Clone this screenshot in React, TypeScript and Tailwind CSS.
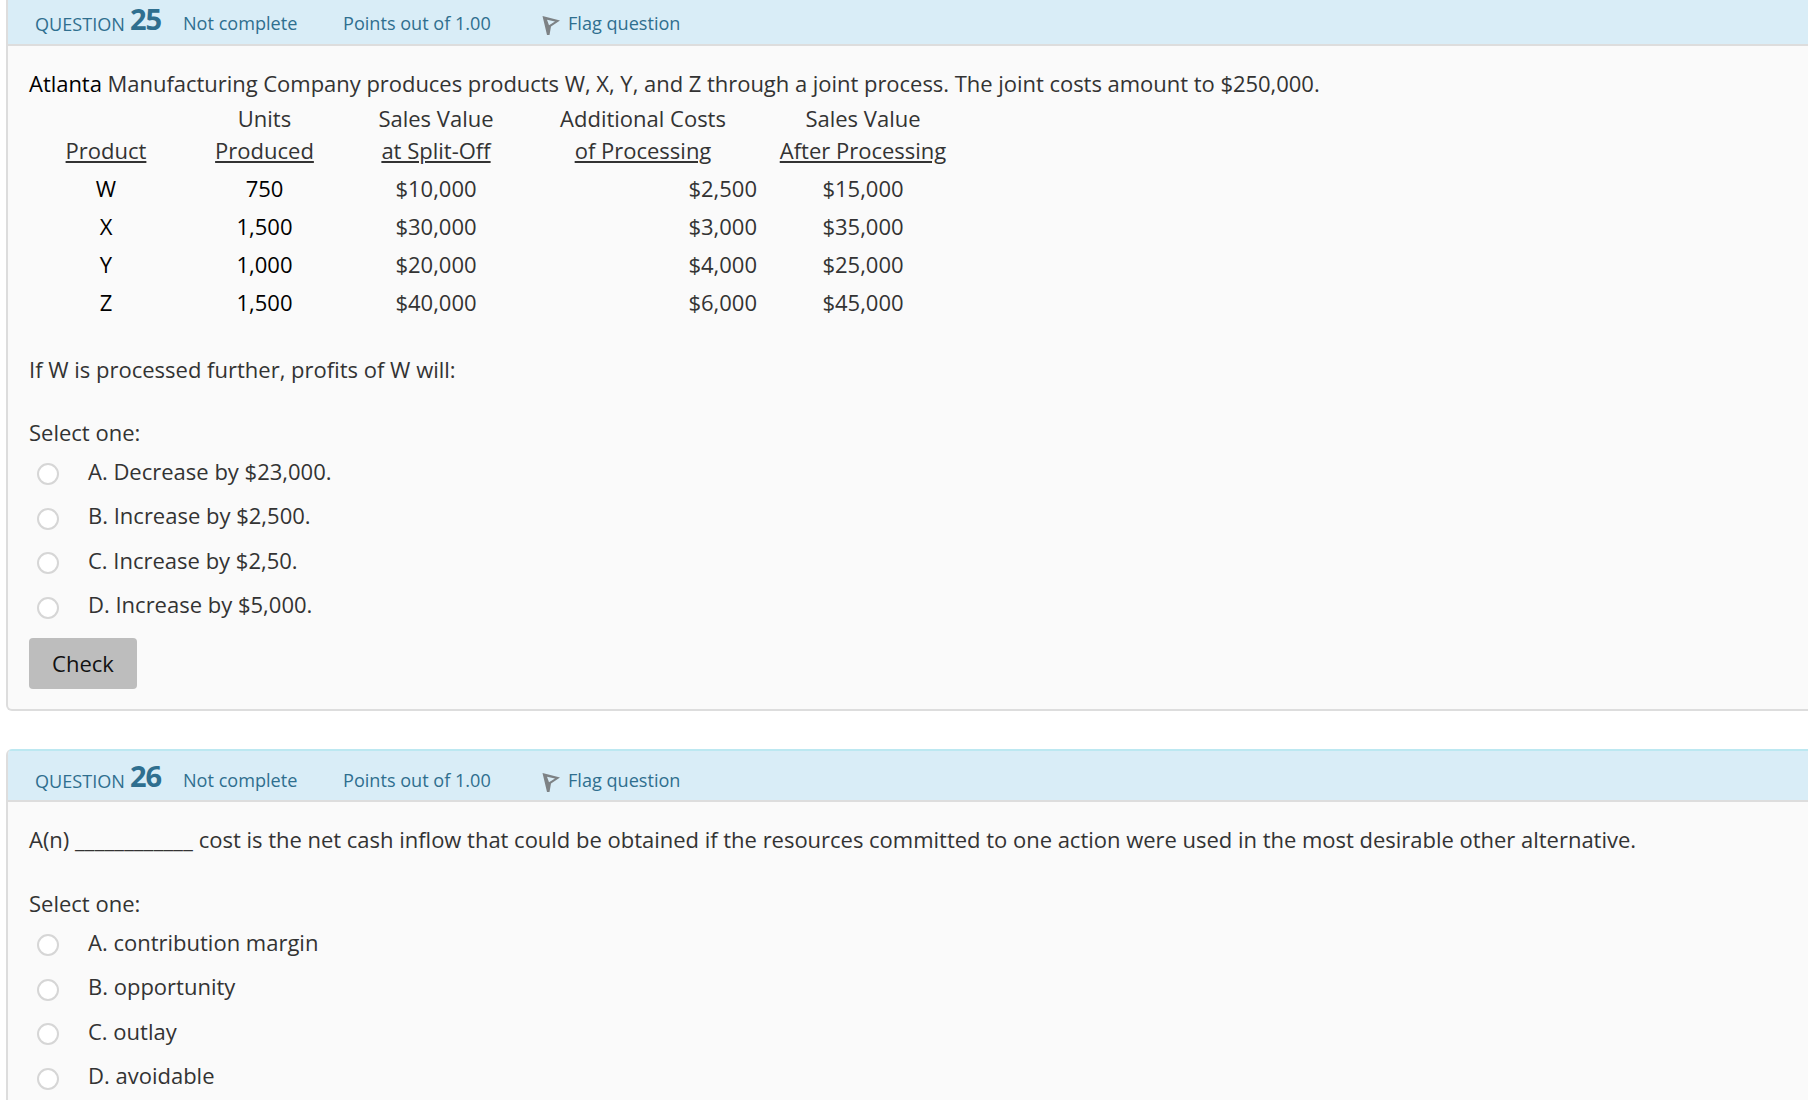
const rows = [
  ['W', '750', '$10,000', '$2,500', '$15,000'],
  ['X', '1,500', '$30,000', '$3,000', '$35,000'],
  ['Y', '1,000', '$20,000', '$4,000', '$25,000'],
  ['Z', '1,500', '$40,000', '$6,000', '$45,000'],
];

function FlagIcon() {
  return (
    <svg width="20" height="22" viewBox="0 0 20 22" className="mt-[3px]">
      <path d="M1.5 2 L19 6.5 L10 12.5 L8.5 21 L6 21 Z M6 5.8 L14 7.4 L8 11.2 Z" fill="#7d8285" fillRule="evenodd" />
    </svg>
  );
}

function QuestionHeader({ num, className }: { num: number; className: string }) {
  return (
    <div className={`flex items-center bg-[#d9edf7] text-[#2f6f8f] text-[18.1px] pl-[27px] border-b-2 border-[#dddddd] ${className}`}>
      <span className="w-[148px] flex items-baseline whitespace-nowrap -translate-y-[2px]">
        QUESTION
        <span className="ml-[5px] text-[29px] leading-none font-bold text-[#2f6f8f] tracking-[-1px] -translate-y-[1px]">{num}</span>
      </span>
      <span className="w-[160px]">Not complete</span>
      <span className="w-[198px] whitespace-nowrap">Points out of 1.00</span>
      <span className="flex items-center gap-[7px]">
        <FlagIcon />
        Flag question
      </span>
    </div>
  );
}

function Option({ label }: { label: string }) {
  return (
    <div className="flex items-center h-[44.5px] pl-[8px]">
      <span className="w-[22px] h-[22px] mt-[6px] rounded-full bg-white border-2 border-[#d6d6d6] shrink-0" />
      <span className="ml-[29px]">{label}</span>
    </div>
  );
}

function HeadCell({ top, bottom, width }: { top?: string; bottom: string; width: string }) {
  return (
    <th className={`font-normal text-center align-bottom pb-[3px] ${width}`}>
      {top && <div className="h-[32px] leading-[32px] whitespace-nowrap">{top}</div>}
      <div className="h-[32px] leading-[32px] underline whitespace-nowrap">{bottom}</div>
    </th>
  );
}

export default function App() {
  return (
    <div className="w-[1808px] h-[1100px] overflow-hidden bg-white text-[22px] text-[#333333] font-['Open_Sans',sans-serif]">
      <div className="ml-[6px] w-[1850px] h-[711px] bg-[#fafafa] border-2 border-t-0 border-[#dddddd] rounded-b-[6px]">
        <QuestionHeader num={25} className="h-[46px] pt-[4px]" />
        <div className="pl-[21px]">
          <p className="pt-[21px] h-[56px] leading-[32px] whitespace-nowrap tracking-[-0.033px]">
            <span className="text-black">Atlanta</span> Manufacturing Company produces products W, X, Y, and Z through a joint process. The joint costs amount to $250,000.
          </p>
          <table className="ml-[18px] border-collapse">
            <thead>
              <tr>
                <HeadCell bottom="Product" width="w-[118px]" />
                <HeadCell top="Units" bottom="Produced" width="w-[199px]" />
                <HeadCell top="Sales Value" bottom="at Split-Off" width="w-[144px]" />
                <HeadCell top="Additional Costs" bottom="of Processing" width="w-[270px]" />
                <HeadCell top="Sales Value" bottom="After Processing" width="w-[170px]" />
              </tr>
            </thead>
            <tbody>
              {rows.map((r) => (
                <tr key={r[0]} className="h-[38px]">
                  <td className="text-center text-black">{r[0]}</td>
                  <td className="text-center text-black">{r[1]}</td>
                  <td className="text-center">{r[2]}</td>
                  <td className="text-right pr-[21px]">{r[3]}</td>
                  <td className="text-center">{r[4]}</td>
                </tr>
              ))}
            </tbody>
          </table>
          <p className="mt-[32px] h-[32px] leading-[32px]">If W is processed further, profits of W will:</p>
          <p className="mt-[31px] h-[32px] leading-[32px]">Select one:</p>
          <div className="mt-[1px]">
            <Option label="A. Decrease by $23,000." />
            <Option label="B. Increase by $2,500." />
            <Option label="C. Increase by $2,50." />
            <Option label="D. Increase by $5,000." />
          </div>
          <button className="mt-[11px] w-[108px] h-[51px] rounded-[4px] bg-[#bdbdbd] text-[#111111]">Check</button>
        </div>
      </div>

      <div className="mt-[38px] ml-[6px] w-[1850px] h-[500px] bg-[#fafafa] border-2 border-t-0 border-[#dddddd] rounded-t-[6px] overflow-hidden">
        <QuestionHeader num={26} className="h-[53px] -mx-[2px] pl-[29px] pt-[11px] border-t-2 border-t-[#bce8f1]" />
        <div className="pl-[21px]">
          <p className="pt-[21px] leading-[32px] whitespace-nowrap tracking-[-0.017px]">
            A(n) <span className="tracking-[0.2px]">____________</span> cost is the net cash inflow that could be obtained if the resources committed to one action were used in the most desirable other alternative.
          </p>
          <p className="mt-[32px] h-[32px] leading-[32px]">Select one:</p>
          <div className="mt-[1px]">
            <Option label="A. contribution margin" />
            <Option label="B. opportunity" />
            <Option label="C. outlay" />
            <Option label="D. avoidable" />
          </div>
        </div>
      </div>
    </div>
  );
}
